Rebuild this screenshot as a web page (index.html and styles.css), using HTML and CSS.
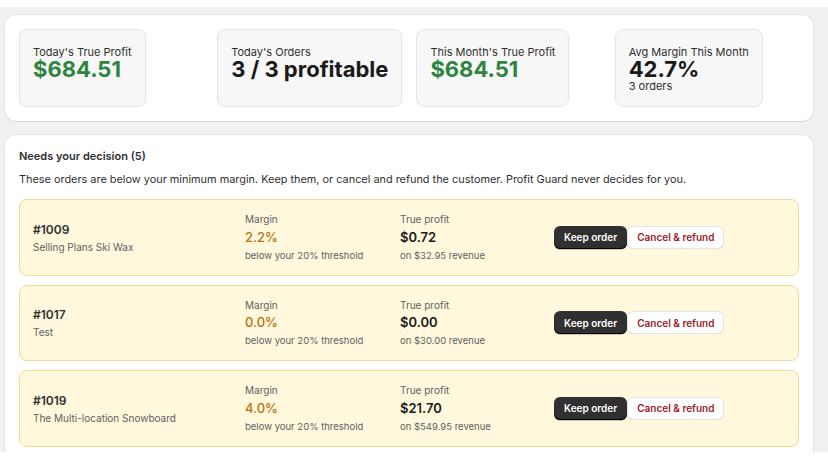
FILE: index.html
```html
<!DOCTYPE html>
<html>
<head>
  <title>Profit Guard</title>
  <link rel="stylesheet" href="styles.css">
</head>
<body>
  <div class="topbar"></div>

  <div class="frame">
    <section class="card">
      <div class="stats">
        <div class="stat">
          <div class="stat-label">Today's True Profit</div>
          <div class="stat-value green">$684.51</div>
        </div>
        <div class="stat">
          <div class="stat-label">Today's Orders</div>
          <div class="stat-value">3 / 3 profitable</div>
        </div>
        <div class="stat">
          <div class="stat-label">This Month's True Profit</div>
          <div class="stat-value green">$684.51</div>
        </div>
        <div class="stat">
          <div class="stat-label">Avg Margin This Month</div>
          <div class="stat-value">42.7%</div>
          <div class="stat-sub">3 orders</div>
        </div>
      </div>
    </section>

    <section class="card">
      <h2 class="card-title">Needs your decision (5)</h2>
      <p class="intro">These orders are below your minimum margin. Keep them, or cancel and refund the customer. Profit Guard never decides for you.</p>

      <div class="orders">
        <div class="order">
          <div class="order-info">
            <div class="order-id">#1009</div>
            <div class="order-name">Selling Plans Ski Wax</div>
          </div>
          <div class="metric">
            <div class="metric-label">Margin</div>
            <div class="metric-value warn">2.2%</div>
            <div class="metric-sub">below your 20% threshold</div>
          </div>
          <div class="metric">
            <div class="metric-label">True profit</div>
            <div class="metric-value">$0.72</div>
            <div class="metric-sub">on $32.95 revenue</div>
          </div>
          <div class="actions">
            <button class="btn btn-dark">Keep order</button>
            <button class="btn btn-light">Cancel &amp; refund</button>
          </div>
        </div>

        <div class="order">
          <div class="order-info">
            <div class="order-id">#1017</div>
            <div class="order-name">Test</div>
          </div>
          <div class="metric">
            <div class="metric-label">Margin</div>
            <div class="metric-value warn">0.0%</div>
            <div class="metric-sub">below your 20% threshold</div>
          </div>
          <div class="metric">
            <div class="metric-label">True profit</div>
            <div class="metric-value">$0.00</div>
            <div class="metric-sub">on $30.00 revenue</div>
          </div>
          <div class="actions">
            <button class="btn btn-dark">Keep order</button>
            <button class="btn btn-light">Cancel &amp; refund</button>
          </div>
        </div>

        <div class="order">
          <div class="order-info">
            <div class="order-id">#1019</div>
            <div class="order-name">The Multi-location Snowboard</div>
          </div>
          <div class="metric">
            <div class="metric-label">Margin</div>
            <div class="metric-value warn">4.0%</div>
            <div class="metric-sub">below your 20% threshold</div>
          </div>
          <div class="metric">
            <div class="metric-label">True profit</div>
            <div class="metric-value">$21.70</div>
            <div class="metric-sub">on $549.95 revenue</div>
          </div>
          <div class="actions">
            <button class="btn btn-dark">Keep order</button>
            <button class="btn btn-light">Cancel &amp; refund</button>
          </div>
        </div>
      </div>
    </section>
  </div>
</body>
</html>
```

FILE: styles.css
```css
body {
  margin: 0;
  font-family: Inter, "Noto Sans", sans-serif;
  color: #303030;
  background-color: #ffffff;
}

.topbar {
  height: 7px;
  background-color: #ffffff;
}

.frame {
  height: 445px;
  overflow: hidden;
  background-color: #f1f1f1;
  padding: 8px 15px 0 5px;
  box-sizing: border-box;
  display: flex;
  flex-direction: column;
  gap: 14px;
}

.card {
  background-color: #ffffff;
  border-radius: 11px;
  box-shadow: 0 0 0 1px rgba(0, 0, 0, 0.05), 0 1px 1px rgba(0, 0, 0, 0.06);
  padding: 14px;
  flex-shrink: 0;
}

/* stats */

.stats {
  display: grid;
  grid-template-columns: repeat(4, 1fr);
  gap: 14px;
  justify-items: start;
}

.stat {
  background-color: #f7f7f7;
  border: 1px solid #e6e6e6;
  border-radius: 8px;
  padding: 16px 13px 14px;
  white-space: nowrap;
}

.stat-label {
  font-size: 11px;
  line-height: 12px;
  color: #303030;
}

.stat-value {
  font-size: 22px;
  font-weight: 700;
  line-height: 22px;
  color: #1a1a1a;
}

.stat-value.green {
  color: #2e8540;
}

.stat-sub {
  font-size: 11px;
  line-height: 12px;
  color: #303030;
}

/* decisions */

.card-title {
  font-size: 11px;
  font-weight: 600;
  line-height: 15px;
  margin: 0 0 8px;
  color: #303030;
}

.intro {
  font-size: 10.9px;
  margin: 0 0 13px;
}

.orders {
  display: flex;
  flex-direction: column;
  gap: 9px;
}

.order {
  display: grid;
  grid-template-columns: 212px 155px 154px auto;
  align-items: center;
  background-color: #fff8dd;
  border: 1px solid #f1dd92;
  border-radius: 8px;
  padding: 13px;
}

.order-id {
  font-size: 12px;
  font-weight: 600;
  color: #303030;
}

.order-name {
  font-size: 10px;
  color: #616161;
  margin-top: 4px;
}

.metric-label {
  font-size: 10px;
  line-height: 12px;
  color: #616161;
}

.metric-value {
  font-size: 13px;
  font-weight: 600;
  line-height: 16px;
  color: #1a1a1a;
  margin-top: 3.5px;
}

.metric-value.warn {
  color: #b9730d;
  font-weight: 500;
}

.metric-sub {
  font-size: 9.5px;
  line-height: 12px;
  color: #616161;
  margin-top: 5px;
}

.actions {
  display: flex;
}

.btn {
  font-family: inherit;
  font-size: 10px;
  font-weight: 600;
  height: 23px;
  padding: 0 10px;
  border: none;
  border-radius: 6px;
  cursor: pointer;
}

.btn-dark {
  background-color: #303030;
  color: #ffffff;
  box-shadow: inset 0 -1px 0 #000000, 0 1px 0 rgba(0, 0, 0, 0.2);
}

.btn-light {
  background-color: #ffffff;
  color: #9b1c2c;
  box-shadow: inset 0 0 0 1px #e3e3e3, inset 0 -1px 0 #cccccc;
}
```
